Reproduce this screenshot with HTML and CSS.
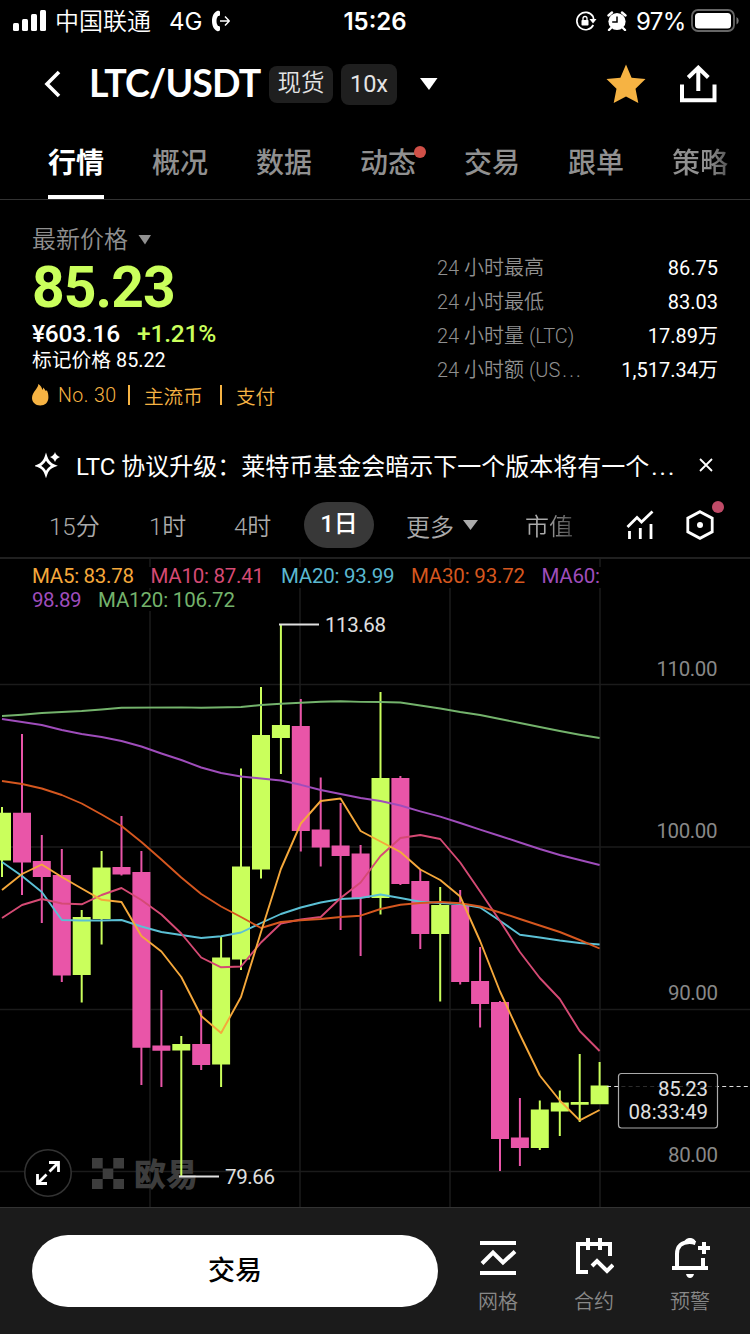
FILE: index.html
```html
<!DOCTYPE html>
<html lang="zh-CN">
<head>
<meta charset="utf-8">
<title>LTC/USDT</title>
<link rel="stylesheet" href="styles.css">
</head>
<body>
<div class="app">
  <div class="status">
    <div class="status-left">
      <svg class="signal" width="34" height="22" viewBox="0 0 34 22" fill="#fff"><rect x="0" y="13" width="6" height="8" rx="1.5"/><rect x="9" y="9" width="6" height="12" rx="1.5"/><rect x="18" y="4" width="6" height="17" rx="1.5"/><rect x="27" y="0" width="6" height="21" rx="1.5"/></svg>
      <span class="carrier">中国联通</span>
      <span class="net">4G</span>
      <svg width="18" height="22" viewBox="0 0 18 22"><path d="M5 1C1.500 2.500 0 7 0 11s1.500 8.500 5 10c1.500.6 3-.2 3-1.200v-2.500c0-1-.8-1.300-2-1.300C5 14.500 4.500 13 4.500 11S5 7.500 6 6c1.200 0 2-.3 2-1.300V2C8 1 6.500.3 5 1z" fill="#fff"/><path d="M8 11h9M13 6.500l4.300 4.500-4.300 4.500" fill="none" stroke="#fff" stroke-width="1.500"/></svg>
    </div>
    <div class="clock">15:26</div>
    <div class="status-right">
      <svg width="22" height="20" viewBox="0 0 22 20"><path d="M18 5.500A8.700 8.700 0 1 0 18.300 14" fill="none" stroke="#fff" stroke-width="1.700"/><path d="M14.500 8h7l-3.500 4.600z" fill="#fff"/><path d="M17.800 5q.8 1.700.8 4" stroke="#fff" stroke-width="1.700" fill="none"/><rect x="6.500" y="9" width="7" height="5.500" rx=".8" fill="#fff"/><path d="M8 9.500V7.500a2 2 0 0 1 4 0v2" fill="none" stroke="#fff" stroke-width="1.300"/></svg>
      <svg class="alarm" width="20" height="20" viewBox="0 0 20 20"><circle cx="10" cy="10.500" r="8.600" fill="#fff"/><path d="M1.500 4.500L5 1.500M18.500 4.500L15 1.500M4 17l-2 2M16 17l2 2" stroke="#fff" stroke-width="2.400" stroke-linecap="round"/><path d="M10 5.500V11H5.200" fill="none" stroke="#000" stroke-width="1.500"/></svg>
      <span class="pct">97%</span>
      <svg width="49" height="24" viewBox="0 0 49 24"><rect x="1" y="1" width="42" height="21" rx="6" fill="none" stroke="#666" stroke-width="1.800"/><rect x="4" y="4" width="36" height="15.500" rx="3.500" fill="#fff"/><path d="M45.500 8v7.500q2.200-1.200 2.200-3.700T45.500 8z" fill="#777"/></svg>
    </div>
  </div>

  <div class="header">
    <svg class="back" width="18" height="28" viewBox="0 0 18 28"><path d="M15 2L3 14l12 12" fill="none" stroke="#fff" stroke-width="3.600"/></svg>
    <div class="pair">LTC/USDT</div>
    <div class="chip spot">现货</div>
    <div class="chip lever">10x</div>
    <svg class="caret" width="20" height="12" viewBox="0 0 20 12"><path d="M1 0h17.500L10 12z" fill="#fff"/></svg>
    <svg class="star" width="40" height="40" viewBox="0 0 40 40"><path d="M20 .5l5.600 13.200L39.500 15l-10 9.700L32.300 39 20 32.500 7.700 39l2.800-14.300L.5 15l13.900-1.300z" fill="#f6b343"/></svg>
    <svg width="38" height="38" viewBox="0 0 38 38"><path d="M2 19.500V35.200H34.500V19.500M18.300 26V3M8.200 12.500L18.300 2.700l10 9.800" fill="none" stroke="#fff" stroke-width="4"/></svg>
  </div>

  <div class="tabs">
    <div class="tab active">行情</div>
    <div class="tab">概况</div>
    <div class="tab">数据</div>
    <div class="tab">动态<i class="dot"></i></div>
    <div class="tab">交易</div>
    <div class="tab">跟单</div>
    <div class="tab fade">策略</div>
  </div>

  <div class="summary">
    <div class="quote">
      <div class="label">最新价格<svg width="14" height="10" viewBox="0 0 14 10"><path d="M.5 0h12.500L7 9.500z" fill="#909090"/></svg></div>
      <div class="price">85.23</div>
      <div class="fiat"><span>¥603.16</span><span class="up">+1.21%</span></div>
      <div class="mark">标记价格 <span>85.22</span></div>
      <div class="tags">
        <svg width="17" height="22" viewBox="0 0 17 22"><path d="M6.300 0c2.500 1.500 3.700 3.500 4 6l1.300-2.500c.5 1.500 1.500 2.300 2.300 3.500l1-.8c1 2.200 1.500 4.300 1.500 7.300 0 5-3.500 8-8.200 8S0 18.300 0 14c0-3.500 1.700-5.500 3.500-8C5 4 6.300 2.300 6.300 0z" fill="#f6b343"/></svg>
        <span class="rank">No. 30</span><i class="bar b1"></i><span class="t1">主流币</span><i class="bar b2"></i><span>支付</span>
      </div>
    </div>
    <div class="stats">
      <div class="stat"><span>24 小时最高</span><b>86.75</b></div>
      <div class="stat"><span>24 小时最低</span><b>83.03</b></div>
      <div class="stat"><span>24 小时量 (LTC)</span><b>17.89万</b></div>
      <div class="stat"><span>24 小时额 (US<em>...</em></span><b>1,517.34万</b></div>
    </div>
  </div>

  <div class="news">
    <svg class="spark" width="26" height="26" viewBox="0 0 26 26"><path d="M11 5Q13 11.500 19 13.800Q13 16 11 22Q9 16 3 13.800Q9 11.500 11 5z" fill="none" stroke="#fff" stroke-width="2.700"/><path d="M20 0Q21 3.500 25 5Q21 6.500 20 10Q19 6.500 15 5Q19 3.500 20 0z" fill="#fff"/></svg>
    <div class="headline">LTC 协议升级：莱特币基金会暗示下一个版本将有一个<em>...</em></div>
    <svg class="close" width="14" height="14" viewBox="0 0 14 14"><path d="M1 1l12 12M13 1L1 13" stroke="#fff" stroke-width="1.800"/></svg>
  </div>

  <div class="frames">
    <span class="f15">15分</span>
    <span class="f1h">1时</span>
    <span class="f4h">4时</span>
    <span class="pill">1日</span>
    <span class="more">更多<svg width="15" height="10" viewBox="0 0 15 10"><path d="M0 0h15L7.500 10z" fill="#aaa"/></svg></span>
    <span class="cap">市值</span>
    <svg class="ind" width="28" height="30" viewBox="0 0 28 30"><path d="M1.500 17L11 7.500l4.500 4.500L26.500 1.500" fill="none" stroke="#fff" stroke-width="2.800"/><path d="M3.500 21v8M14.300 18v11M25 14v15" stroke="#fff" stroke-width="2.800"/></svg>
    <span class="gear"><svg width="28" height="30" viewBox="0 0 28 30"><path d="M14 1.700l12.200 6.500v13.600L14 28.300 1.800 21.800V8.200z" fill="none" stroke="#fff" stroke-width="2.800"/><circle cx="14" cy="15" r="3" fill="#fff"/></svg><i class="dot"></i></span>
  </div>

  <div class="chart">
    <svg width="750" height="649" viewBox="0 558 750 649">
      <path d="M0 558.500H750" stroke="#202020"/>
      <path class="grid" d="M150 559V1207M300 559V1207M450 559V1207M600 559V1207M0 684.500H750M0 847H750M0 1009.500H750M0 1171.500H750"/>
      <g fill="#3d3d3d"><path d="M92 1158h10.700v10.500H92zM113.300 1158H124v10.500h-10.700zM102.700 1168.500h10.600v10.500h-10.600zM92 1179h10.700v10H92zM113.300 1179H124v10h-10.700z"/><text class="brand" x="134" y="1185.500" textLength="64" lengthAdjust="spacingAndGlyphs">欧易</text></g>
      <g class="wick up">
        <path d="M2 807V877M81.700 910V1002.500M101.600 851V944.500M181.300 1036V1176M221.100 937V1087M241 768.500V970M261 687V878.500M280.900 624V774M380.500 692V914.500M440.200 887V1001.500M539.800 1100.500V1150M559.800 1090.500V1136M579.700 1054V1122M599.600 1062V1104"/>
      </g>
      <g class="wick down">
        <path d="M22 734V895M41.800 835V923M61.800 849V982M121.500 816V875.500M141.400 851V1085M161.400 990V1087M201.200 1010V1070M300.800 699V851.500M320.700 777.500V866.500M340.600 803V930M360.600 845V956M400.400 776V885M420.300 870V949M460.200 890V984.500M480.100 947V1027.500M500 1001V1171M519.900 1098V1166"/>
      </g>
      <g class="body up">
        <path d="M2 812.800V860.500M81.700 917V975M101.600 867.500V919M181.300 1044V1050.500M221.100 957.500V1064.500M241 866.500V959.500M261 735V869.500M280.900 725V738M380.500 778V898M440.200 905V934M539.800 1109.500V1148M559.800 1102.500V1111.500M579.700 1102V1104.700M599.600 1085.500V1104.200"/>
      </g>
      <g class="body down">
        <path d="M22 812.800V862.500M41.800 861V877M61.800 875V975.500M121.500 867V874.500M141.400 872V1047.700M161.400 1045.500V1050.700M201.200 1044V1065M300.800 726V831M320.700 829.500V847.500M340.600 845.500V856M360.600 853.500V898M400.400 778V884M420.300 881V934M460.200 905V982M480.100 981V1004M500 1002V1139M519.900 1137.500V1148"/>
      </g>
      <g class="ma">
        <polyline stroke="#74b36c" points="2,716 22,714.700 41.800,713 61.800,712 81.700,711 101.600,709.500 121.500,707.800 181.300,707.400 201.200,707.800 241,707 261,705 280.900,703.700 300.800,702.700 320.700,701.800 340.600,701.300 360.600,701.900 380.500,702 400.400,702.500 420.300,705.500 440.200,708.500 460.200,712 480.100,715 500,719 519.900,723 539.800,727 559.800,731 579.700,734.700 599.600,738"/>
        <polyline stroke="#9f4dbb" points="2,719 22,722 41.800,725 61.800,730 81.700,734 101.600,737 121.500,741 141.400,746.500 161.400,753.500 181.300,760 201.200,767.500 221.100,773 241,776.500 261,778.500 280.900,780.500 300.800,784.800 320.700,790 340.600,794 360.600,798 380.500,801 400.400,805.500 420.300,811.300 440.200,816.700 460.200,823 480.100,829.700 500,836 519.900,842.500 539.800,849 559.800,855 579.700,860 599.600,865"/>
        <polyline stroke="#5bc0d5" points="2,862 22,876 41.800,892 61.800,920 81.700,920.500 101.600,920.500 121.500,920 141.400,926.500 161.400,932 181.300,935 201.200,938 221.100,936.300 241,932.500 261,923 280.900,914 300.800,907.500 320.700,902.500 340.600,899 360.600,898 380.500,894.500 400.400,898 420.300,901.700 440.200,903 460.200,904 480.100,907.500 500,920.700 519.900,934.700 539.800,937.500 559.800,940.500 579.700,943 599.600,944.500"/>
        <polyline stroke="#d54a74" points="2,918 22,905 41.800,899 61.800,903.500 81.700,904.300 101.600,895 121.500,888 141.400,900 161.400,914.500 181.300,933.500 201.200,957.500 221.100,967.300 241,966.500 261,942.500 280.900,923.500 300.800,919.500 320.700,917 340.600,898 360.600,882.500 380.500,856 400.400,838 420.300,835 440.200,839 460.200,862.500 480.100,891.500 500,921 519.900,952 539.800,978 559.800,999 579.700,1031 599.600,1051"/>
        <polyline stroke="#d5571f" points="2,781 22,784 41.800,788.500 61.800,795 81.700,803.500 101.600,814.500 121.500,826 141.400,842 161.400,859.500 181.300,877.500 201.200,894 221.100,906.500 241,917 261,928 280.900,922 300.800,920.300 320.700,919 340.600,917 360.600,915.700 380.500,909 400.400,904.800 420.300,903 440.200,902 460.200,903.300 480.100,906.500 500,912.500 519.900,919 539.800,925.500 559.800,932 579.700,940 599.600,948.500"/>
        <polyline stroke="#f5a83b" points="2,890 22,874 41.800,864.500 61.800,877 81.700,888.500 101.600,899.800 121.500,902 141.400,936 161.400,951.500 181.300,977 201.200,1016 221.100,1033 241,997 261,932 280.900,869 300.800,823.500 320.700,801 340.600,798.500 360.600,831 380.500,841.500 400.400,852 420.300,869.500 440.200,880 460.200,896.500 480.100,941 500,991.500 519.900,1034.500 539.800,1075.500 559.800,1100.500 579.700,1120.300 599.600,1110"/>
      </g>
      <path class="lead" d="M279 624.500H319M179 1176.500H219"/>
      <text class="val" x="325" y="631.500" textLength="61">113.68</text>
      <text class="val" x="225" y="1183.500" textLength="50">79.66</text>
      <g class="axis">
        <text x="656.500" y="675.500" textLength="61">110.00</text>
        <text x="656.500" y="837.500" textLength="61">100.00</text>
        <text x="668" y="1000" textLength="50">90.00</text>
        <text x="668" y="1162" textLength="50">80.00</text>
      </g>
      <path d="M607 1086.500H750" stroke="#ddd" stroke-width="1.200" stroke-dasharray="4 3.200"/>
      <rect x="618.500" y="1073.500" width="99" height="54.500" rx="3" fill="#000" fill-opacity=".8" stroke="#aaa" stroke-width="1.200"/>
      <text class="val" x="658" y="1096" textLength="50">85.23</text>
      <text class="val" x="628.500" y="1119" textLength="79.500">08:33:49</text>
      <g class="legend">
        <rect x="30" y="567" width="572" height="21" fill="#000"/>
        <rect x="30" y="591" width="208" height="20" fill="#000"/>
        <text x="32" y="583" fill="#f5a83b" textLength="102">MA5: 83.78</text>
        <text x="150.500" y="583" fill="#d54a74" textLength="113.500">MA10: 87.41</text>
        <text x="281" y="583" fill="#5bb8d0" textLength="113.500">MA20: 93.99</text>
        <text x="411" y="583" fill="#d5571f" textLength="114">MA30: 93.72</text>
        <text x="541.500" y="583" fill="#9f4dbb" textLength="58.500">MA60:</text>
        <text x="32" y="607" fill="#9f4dbb" textLength="49.500">98.89</text>
        <text x="98" y="607" fill="#74b36c" textLength="137">MA120: 106.72</text>
      </g>
      <circle cx="48" cy="1173" r="23.200" fill="#000" stroke="#333" stroke-width="1.500"/>
      <path d="M49.500 1171.500L58 1163M49 1162.500h9.500v9.500M46.500 1174.500L38 1183M37.500 1174v9.500H47" fill="none" stroke="#fff" stroke-width="2.800"/>
    </svg>
  </div>

  <div class="dock">
    <div class="trade">交易</div>
    <div class="action"><svg width="40" height="40" viewBox="0 0 40 40" fill="none" stroke="#fff" stroke-width="4"><path d="M2 5H38M2 35H38M4 25.500L15 14.500l10 10L37 13.500"/></svg><span>网格</span></div>
    <div class="action"><svg width="40" height="40" viewBox="0 0 40 40" fill="none" stroke="#fff" stroke-width="4"><path d="M14 34H4V6H36v12M14 0v12M26 0v12M18 28l5-5 10 10 6-6"/></svg><span>合约</span></div>
    <div class="action"><svg width="40" height="40" viewBox="0 0 40 40" fill="none" stroke="#fff" stroke-width="4"><path d="M2 30H38M7 30V16C7 8 12 4 19.500 4q3 0 6 1M33 30V20M28 10H40M34 4v12M16 4q4-4 8 0"/><path d="M16 36h8q-1 4-4 4t-4-4z" fill="#fff" stroke="none"/></svg><span>预警</span></div>
  </div>
</div>
</body>
</html>
```
FILE: styles.css
```css
* { box-sizing: border-box; }
body { margin: 0; background: #000; color: #fff; font-family: Roboto, "Noto Sans CJK SC", sans-serif; }
svg { display: block; flex: none; }
em { font-style: normal; letter-spacing: 2px; margin-left: 2px; }
.app { width: 750px; height: 1334px; overflow: hidden; display: flex; flex-direction: column; }
.app > div { flex: none; white-space: nowrap; }

.status { height: 40px; display: grid; grid-template-columns: 1fr 66px 1fr; align-items: center; font-family: Inter, "Noto Sans CJK SC", sans-serif; font-size: 24px; line-height: 40px; }
.status-left { display: flex; align-items: center; padding-left: 13px; }
.carrier { margin-left: 8px; width: 97px; font-size: 24px; font-weight: 350; padding-top: 1px; }
.net { margin-left: 17px; width: 43px; padding-top: 2px; }
.clock { font-weight: 600; text-align: center; padding-top: 2px; }
.status-right { display: flex; align-items: center; justify-content: flex-end; padding-right: 10px; }
.alarm { margin: 0 9px 0 10px; }
.pct { width: 55px; letter-spacing: -.6px; padding-top: 2px; }

.header { height: 88px; display: flex; align-items: center; padding-left: 44px; }
.pair { margin-left: 27px; width: 171px; font-family: Lato, sans-serif; font-size: 37.500px; font-weight: 700; line-height: 50px; letter-spacing: -.9px; padding-bottom: 2px; }
.chip { background: #1f1f1f; color: #e4e4e4; border-radius: 8px; text-align: center; font-size: 23.500px; }
.spot { margin-left: 9px; width: 64px; height: 37px; line-height: 35px; font-weight: 350; }
.lever { margin-left: 8px; width: 56px; height: 41px; line-height: 41px; }
.caret { margin-left: 22px; }
.star { margin-left: 167px; margin-right: 34px; }

.tabs { height: 72px; display: flex; gap: 48px; padding-left: 48px; border-bottom: 1px solid #333; }
.tab { position: relative; width: 56px; font-size: 28px; line-height: 72px; color: #909090; font-weight: 500; }
.tab.active { color: #fff; font-weight: 700; border-bottom: 4px solid #fff; }
.tab .dot { position: absolute; left: 54px; top: 18px; width: 12px; height: 12px; border-radius: 50%; background: #d05048; }
.fade { background: linear-gradient(90deg, #909090 65%, #555); -webkit-background-clip: text; background-clip: text; color: transparent; }

.summary { height: 230px; display: flex; padding: 23px 32px 0; }
.quote { width: 405px; }
.label { display: flex; align-items: center; gap: 10px; height: 34px; line-height: 31px; font-size: 24px; font-weight: 350; color: #909090; }
.price { height: 62px; line-height: 62px; font-size: 57px; font-weight: 700; color: #caff5c; letter-spacing: -.9px; }
.fiat { display: flex; height: 29px; line-height: 29px; font-size: 24.500px; font-weight: 500; letter-spacing: -.2px; }
.fiat span { width: 105px; }
.up { color: #caff5c; }
.mark { height: 26px; line-height: 26px; font-size: 19.800px; }
.tags { display: flex; align-items: center; height: 42px; font-size: 19.600px; color: #f6b343; font-weight: 350; }
.rank { margin-left: 9px; width: 59px; letter-spacing: .4px; }
.bar { width: 2px; height: 20px; background: #f6b343; }
.b1 { margin-left: 11px; }
.t1 { margin-left: 14px; width: 60px; }
.b2 { margin: 0 14px 0 16px; }
.stats { flex: 1; padding-top: 28px; }
.stat { height: 34px; line-height: 34px; display: flex; justify-content: space-between; font-size: 20px; color: #909090; }
.stat span { font-weight: 350; }
.stat b { color: #fff; font-weight: 400; }

.news { height: 70px; display: flex; align-items: center; padding-left: 35px; }
.headline { margin-left: 15px; width: 598px; font-size: 24px; padding-bottom: 2px; }
.close { margin-left: 25px; }

.frames { height: 58px; padding-bottom: 7px; display: flex; align-items: center; font-size: 24px; font-weight: 350; color: #aaa; border-bottom: 1px solid #202020; }
.f15 { margin-left: 49px; width: 100px; }
.f1h { width: 85px; }
.f4h { width: 70px; }
.pill { width: 70px; height: 46px; line-height: 44px; border-radius: 23px; background: #383838; color: #fff; text-align: center; font-weight: 500; }
.more { display: flex; align-items: center; gap: 9px; margin-left: 32px; width: 119px; }
.cap { width: 101px; background: linear-gradient(90deg, #aaa 20%, #444 48%); -webkit-background-clip: text; background-clip: text; color: transparent; }
.f15, .f1h, .f4h, .cap { padding-bottom: 2px; }
.gear { position: relative; margin-left: 32px; }
.gear .dot { position: absolute; left: 26px; top: -9px; width: 12px; height: 12px; border-radius: 50%; background: #c04b68; }

.chart { height: 649px; }
.chart text { font-size: 20.500px; }
.grid { stroke: #1b1b1b; stroke-width: 1.500; }
.wick { fill: none; stroke-width: 2; }
.body { fill: none; stroke-width: 18; }
.chart .up { stroke: #caff5c; }
.chart .down { stroke: #e955a8; }
.ma { fill: none; stroke-width: 1.900; stroke-linejoin: round; }
.lead { stroke: #e0e0e0; stroke-width: 2; }
.val { fill: #e0e0e0; }
.axis { fill: #888; }
.chart .brand { font-size: 32px; font-weight: 900; }

.dock { height: 127px; display: flex; background: #1b1b1b; border-top: 1px solid #333; padding: 27px 0 0 32px; }
.trade { width: 406px; height: 72px; line-height: 72px; border-radius: 36px; background: #fff; color: #000; text-align: center; font-size: 27px; font-weight: 500; margin-right: 12px; }
.action { width: 96px; display: flex; flex-direction: column; align-items: center; font-size: 20px; line-height: 30px; font-weight: 350; color: #888; padding-top: 3px; gap: 9px; }
```
